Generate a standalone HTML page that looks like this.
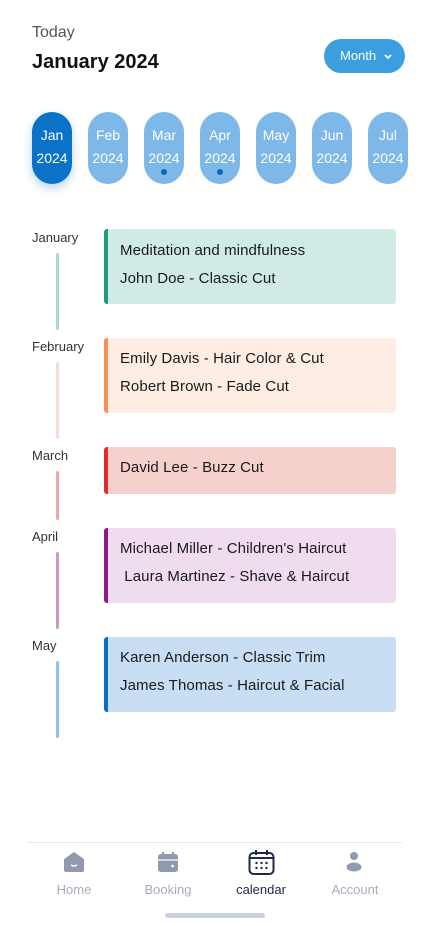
<!DOCTYPE html>
<html><head><meta charset="utf-8"><style>
*{margin:0;padding:0;box-sizing:border-box}
body{width:428px;height:926px;background:#fff;font-family:"Liberation Sans",sans-serif;position:relative;overflow:hidden}
.a{position:absolute}
.pill{position:absolute;top:112px;width:40px;height:72px;border-radius:20px;background:#7db8e8;color:#fff;font-size:14px;text-align:center;line-height:23px;padding-top:12px}
.pill.on{background:#0a72c9;box-shadow:0 4px 10px rgba(10,114,201,.3)}
.dot{position:absolute;left:17px;top:57px;width:6px;height:6px;border-radius:3px;background:#0a66c2}
.lbl{position:absolute;left:32px;font-size:13px;color:#333}
.ln{position:absolute;left:56px;width:3px;border-radius:2px}
.card{position:absolute;left:104px;width:292px;border-left:4px solid;border-radius:3px;padding:12px 0 0 12px;font-size:15px;color:#1a1a1a;line-height:28px;letter-spacing:0.1px}
.nav{position:absolute;top:882px;font-size:13px;color:#a7adbd;text-align:center;width:90px}
</style></head><body>
<div class="a" style="left:32px;top:24px;font-size:16px;color:#555">Today</div>
<div class="a" style="left:32px;top:51px;font-size:20px;font-weight:bold;color:#111">January 2024</div>
<div class="a" style="left:324px;top:39px;width:81px;height:34px;border-radius:17px;background:#3b9ede;color:#fff;font-size:13px;line-height:34px;padding-left:16px">Month <svg width="10" height="8" viewBox="0 0 10 8" style="margin-left:3px"><path d="M2 3l3 3 3-3" stroke="#fff" stroke-width="1.8" fill="none"/></svg></div>

<div class="pill on" style="left:32px">Jan<br>2024</div>
<div class="pill" style="left:88px">Feb<br>2024</div>
<div class="pill" style="left:144px">Mar<br>2024<span class="dot"></span></div>
<div class="pill" style="left:200px">Apr<br>2024<span class="dot"></span></div>
<div class="pill" style="left:256px">May<br>2024</div>
<div class="pill" style="left:312px">Jun<br>2024</div>
<div class="pill" style="left:368px">Jul<br>2024</div>

<div class="lbl" style="top:230px">January</div>
<div class="ln" style="top:253px;height:77px;background:#a8d8cf"></div>
<div class="card" style="top:229px;height:75px;background:#d0ebe5;border-color:#1d9b7f;padding-top:8px">Meditation and mindfulness<br>John Doe - Classic Cut</div>

<div class="lbl" style="top:339px">February</div>
<div class="ln" style="top:362px;height:77px;background:#f8dccb"></div>
<div class="card" style="top:338px;height:75px;background:#feede5;border-color:#f4925a;padding-top:7px">Emily Davis - Hair Color &amp; Cut<br>Robert Brown - Fade Cut</div>

<div class="lbl" style="top:448px">March</div>
<div class="ln" style="top:471px;height:49px;background:#eea8a6"></div>
<div class="card" style="top:447px;height:47px;background:#f6d0cd;border-color:#e02d2a;padding-top:7px">David Lee - Buzz Cut</div>

<div class="lbl" style="top:529px">April</div>
<div class="ln" style="top:552px;height:77px;background:#c79ac7"></div>
<div class="card" style="top:528px;height:75px;background:#efdcee;border-color:#8b1a8b;padding-top:7px">Michael Miller - Children's Haircut<br>&nbsp;Laura Martinez - Shave &amp; Haircut</div>

<div class="lbl" style="top:638px">May</div>
<div class="ln" style="top:661px;height:77px;background:#8fc3ee"></div>
<div class="card" style="top:637px;height:75px;background:#c7def3;border-color:#0b6fc9;padding-top:7px">Karen Anderson - Classic Trim<br>James Thomas - Haircut &amp; Facial</div>

<div class="a" style="left:27px;top:842px;width:375px;height:1px;background:#e8eaee"></div>
<svg class="a" style="left:63px;top:851px" width="22" height="22" viewBox="0 0 22 22"><path d="M1 8L11 1l10 7v11a2 2 0 0 1-2 2H3a2 2 0 0 1-2-2z" fill="#8f9ab0"/><path d="M8 14q3 2 6 0" stroke="#fff" stroke-width="1.5" fill="none"/></svg>
<svg class="a" style="left:157px;top:851px" width="22" height="22" viewBox="0 0 22 22"><rect x="1" y="3" width="20" height="18" rx="3" fill="#8f9ab0"/><path d="M6 1v4M16 1v4" stroke="#8f9ab0" stroke-width="2"/><path d="M1 9h20" stroke="#fff" stroke-width="1.2"/><circle cx="15.5" cy="15" r="1.3" fill="#fff"/></svg>
<svg class="a" style="left:248px;top:849px" width="27" height="27" viewBox="0 0 27 27"><rect x="1.5" y="4" width="24" height="21" rx="4" fill="none" stroke="#1c2a4a" stroke-width="2"/><path d="M8 1v5M19 1v5M1.5 9h24" stroke="#1c2a4a" stroke-width="2"/><g fill="#1c2a4a"><circle cx="8.5" cy="14" r="1.2"/><circle cx="13.5" cy="14" r="1.2"/><circle cx="18.5" cy="14" r="1.2"/><circle cx="8.5" cy="19" r="1.2"/><circle cx="13.5" cy="19" r="1.2"/><circle cx="18.5" cy="19" r="1.2"/></g></svg>
<svg class="a" style="left:344px;top:851px" width="20" height="22" viewBox="0 0 20 22"><circle cx="10" cy="5" r="4" fill="#8f9ab0"/><ellipse cx="10" cy="16" rx="7.5" ry="4.5" fill="#8f9ab0"/></svg>
<div class="nav" style="left:29px">Home</div>
<div class="nav" style="left:123px">Booking</div>
<div class="nav" style="left:216px;color:#1c2a4a">calendar</div>
<div class="nav" style="left:310px">Account</div>
<div class="a" style="left:165px;top:913px;width:100px;height:5px;border-radius:3px;background:#c9d1de"></div>
</body></html>
